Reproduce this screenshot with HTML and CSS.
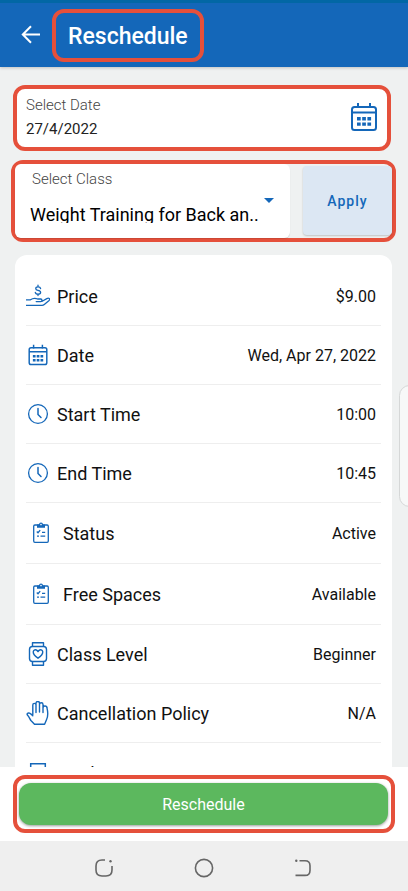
FILE: index.html
```html
<!DOCTYPE html>
<html lang="en">
<head>
<meta charset="utf-8">
<meta name="viewport" content="width=device-width, initial-scale=1">
<title>Reschedule</title>
<link rel="stylesheet" href="styles.css">
</head>
<body>
<svg class="sprite" aria-hidden="true">
  <symbol id="calendar" viewBox="0 0 28 30">
    <g fill="none" stroke="currentColor" stroke-width="2"><rect x="2" y="5" width="24" height="23" rx="2.5"/><path d="M2 10.5h24M8 1v5M20 1v5"/></g>
    <path fill="currentColor" d="M7 15h3.7v3.4H7zM12.2 15h3.7v3.4h-3.7zM17.4 15h3.7v3.4h-3.7zM7 20.4h3.7v3.4H7zM12.2 20.4h3.7v3.4h-3.7zM17.4 20.4h3.7v3.4h-3.7z"/>
  </symbol>
  <symbol id="clock" viewBox="0 0 24 24">
    <g fill="none" stroke="currentColor" stroke-width="1.3" stroke-linecap="round"><circle cx="12" cy="12" r="9.4"/><path stroke-width="1.5" d="M12 6.5v6l3 3"/></g>
  </symbol>
  <symbol id="clipboard" viewBox="0 0 24 24">
    <g fill="none" stroke="currentColor" stroke-width="1.3"><rect x="4.7" y="4" width="14.6" height="17.3" rx="1.2"/><path d="M7.8 10.5l1.2 1.2 2.2-2.6M13 11.3h3.2M8 15.2h2M11.5 15.2h4.7"/></g>
    <path fill="currentColor" d="M8 3.5h2a2 2 0 0 1 4 0h2v3.2H8z"/><circle cx="12" cy="3.6" r=".8" fill="#fff"/>
  </symbol>
  <symbol id="pay" viewBox="0 0 24 24">
    <g fill="none" stroke="currentColor" stroke-width="1.3" stroke-linecap="round" stroke-linejoin="round"><path d="M0 15.8h4.5c2-1.5 4.3-1.8 6-1.1l1 .3h3.2c1.7 0 1.7 2.6 0 2.6h-4.5M16.2 17.2l4.6-2.6c2-1.1 3.9.2 2.3 1.8l-4.8 4q-1 .9-2.3.9H0"/><path d="M14.6 4.5c-.3-1.3-1.2-1.7-2.5-1.7-3.1 0-3.1 3.1-.2 3.6 3.7.6 3.5 3.8.1 3.8-1.6 0-2.5-.7-2.7-1.9M12 1.2v1.6M12 10.2v1.3"/></g>
  </symbol>
  <symbol id="watch" viewBox="0 0 24 24">
    <g fill="none" stroke="currentColor" stroke-width="1.4" stroke-linejoin="round"><rect x="3.5" y="4.5" width="17" height="15" rx="3"/><path d="M6.5 4.2V.7h11v3.5M6.5 19.8v3.5h11v-3.5M12 16.2c-7.5-5.2-4.6-9.3-1.7-8.2q1.1.4 1.7 1.6.6-1.2 1.7-1.6c2.9-1.1 5.8 3-1.7 8.2z"/></g>
  </symbol>
  <symbol id="hand" viewBox="0 0 24 24">
    <path fill="none" stroke="currentColor" stroke-width="1.4" stroke-linecap="round" stroke-linejoin="round" d="M6.8 13.5V4a1.6 1.6 0 0 1 3.2 0v7.5M10 11V2.2a1.7 1.7 0 0 1 3.5 0V11M13.5 3.5a1.7 1.7 0 0 1 3.5 0v8M17 7a1.9 1.9 0 0 1 4-.1c.9 3.9 1.2 8.3-.4 11.6l-2 4.7H8.5L4.9 19.5c-1.2-1.8-1.6-3.4-3.3-5.2-1.2-1.6.2-2.8 1.9-2.1q1.5.7 3.3 2.6"/>
  </symbol>
  <symbol id="building" viewBox="0 0 24 24">
    <g fill="none" stroke="currentColor" stroke-width="1.5"><path d="M4.7 23V2.7h14.6V23M3 23h18M10 23v-5h4v5"/><path d="M8 7h2.5M13.5 7H16M8 11h2.5M13.5 11H16M8 15h2.5M13.5 15H16"/></g>
  </symbol>
</svg>

<header class="topbar">
  <button class="icon-button back" type="button" aria-label="Back">
    <svg viewBox="0 0 20 20" width="20" height="20"><path d="M19 9.5H2M10 1.3L1.8 9.5l8.2 8.2" fill="none" stroke="currentColor" stroke-width="2"/></svg>
  </button>
  <h1 class="title marked">Reschedule</h1>
</header>

<main class="content">
  <div class="date-field marked">
    <div class="date-text">
      <label for="date">Select Date</label>
      <input id="date" type="text" value="27/4/2022">
    </div>
    <button class="icon-button" type="button" aria-label="Open calendar"><svg width="28" height="30"><use href="#calendar"/></svg></button>
  </div>

  <div class="class-row marked">
    <div class="class-field">
      <label for="class">Select Class</label>
      <div class="select-line">
        <select id="class"><option>Weight Training for Back an..</option></select>
        <svg class="caret" viewBox="0 0 10 5" width="10" height="5"><path d="M0 0h10L5 5z" fill="currentColor"/></svg>
      </div>
    </div>
    <button class="apply" type="button">Apply</button>
  </div>

  <dl class="details">
    <div class="row"><dt><svg class="icon"><use href="#pay"/></svg>Price</dt><dd>$9.00</dd></div>
    <div class="row"><dt><svg class="icon small"><use href="#calendar"/></svg>Date</dt><dd>Wed, Apr 27, 2022</dd></div>
    <div class="row"><dt><svg class="icon"><use href="#clock"/></svg>Start Time</dt><dd>10:00</dd></div>
    <div class="row"><dt><svg class="icon"><use href="#clock"/></svg>End Time</dt><dd>10:45</dd></div>
    <div class="row inset"><dt><svg class="icon"><use href="#clipboard"/></svg>Status</dt><dd>Active</dd></div>
    <div class="row inset"><dt><svg class="icon"><use href="#clipboard"/></svg>Free Spaces</dt><dd>Available</dd></div>
    <div class="row"><dt><svg class="icon"><use href="#watch"/></svg>Class Level</dt><dd>Beginner</dd></div>
    <div class="row"><dt><svg class="icon"><use href="#hand"/></svg>Cancellation Policy</dt><dd>N/A</dd></div>
    <div class="row tall"><dt><svg class="icon"><use href="#building"/></svg>Facility</dt><dd></dd></div>
  </dl>
  <div class="edge-handle"></div>
</main>

<footer class="actions">
  <div class="marked action-frame"><button class="primary" type="button">Reschedule</button></div>
</footer>

<nav class="system-nav" aria-label="System">
  <button class="icon-button" type="button" aria-label="Recent apps"><svg width="20" height="20" viewBox="0 0 20 20"><path d="M11 2H8Q2 2 2 8v4q0 6 6 6h4q6 0 6-6V8" fill="none" stroke="currentColor" stroke-width="1.6"/><circle cx="16.5" cy="3.2" r="1.2" fill="currentColor"/></svg></button>
  <button class="icon-button" type="button" aria-label="Home"><svg width="20" height="20" viewBox="0 0 20 20"><circle cx="10" cy="10" r="8.6" fill="none" stroke="currentColor" stroke-width="1.6"/></svg></button>
  <button class="icon-button" type="button" aria-label="Back"><svg width="20" height="20" viewBox="0 0 20 20"><path d="M5.5 2.8H11q5 0 5 5v4.6q0 5-5 5H1.5" fill="none" stroke="currentColor" stroke-width="1.6"/><circle cx="2.3" cy="2.8" r="1.2" fill="currentColor"/></svg></button>
</nav>
</body>
</html>
```
FILE: styles.css
```css
* { box-sizing: border-box; }

:root {
  --blue: #1467b9;
  --mark: #e5503b;
}

body {
  display: flex;
  flex-direction: column;
  height: 100vh;
  margin: 0;
  overflow: hidden;
  background: #eff1f1;
  color: #111;
  font-family: Roboto, "Liberation Sans", sans-serif;
  font-size: 16px;
}

button, input, select {
  margin: 0;
  padding: 0;
  border: 0;
  background: none;
  color: inherit;
  font: inherit;
}

.sprite {
  position: absolute;
  width: 0;
  height: 0;
}

.marked {
  border: 4px solid var(--mark);
  border-radius: 12px;
}

.icon-button {
  display: flex;
  color: var(--blue);
}

.topbar {
  display: flex;
  flex: none;
  align-items: center;
  gap: 11px;
  height: 67px;
  padding: 0 21px;
  border-top: 3px solid #0267a5;
  background: var(--blue);
  box-shadow: 0 1px 3px rgba(0, 0, 0, .2);
}

.back { color: #fff; }

.title {
  margin: 0;
  padding: 2px 12px 0;
  color: #fff;
  font-size: 23px;
  font-weight: 500;
  line-height: 43px;
}

.content {
  position: relative;
  flex: 1;
  min-height: 0;
  padding: 18px 12px 0 11px;
  overflow: hidden;
}

label {
  display: block;
  color: #444;
  font-size: 15px;
  font-weight: 300;
  line-height: 18px;
}

.date-field {
  display: flex;
  align-items: center;
  justify-content: space-between;
  height: 66px;
  margin: 0 5px 9px 2px;
  padding: 0 9px 2px;
  background: #fff;
}

.date-text { flex: 1; }

#date {
  width: 100%;
  margin-top: 6px;
  color: #222;
  font-size: 15px;
  line-height: 18px;
}

.class-row {
  display: flex;
  gap: 13px;
  height: 82px;
}

.class-field {
  flex: 1;
  padding: 6px 16px 6px 15px;
  border-radius: 6px;
  background: #fff;
  box-shadow: 0 1px 1px rgba(0, 0, 0, .12);
}

.class-field label { padding-left: 2px; }

.select-line {
  display: flex;
  margin-top: 10px;
}

#class {
  flex: 1;
  min-width: 0;
  height: 19px;
  margin-top: 6px;
  appearance: none;
  color: #000;
  font-size: 18px;
}

.caret { color: var(--blue); }

.apply {
  width: 89px;
  margin: 2px 0 3px;
  border-radius: 4px;
  background: #dce7f3;
  box-shadow: 0 1px 2px rgba(0, 0, 0, .2);
  color: var(--blue);
  font-size: 14px;
  font-weight: 500;
  letter-spacing: 1px;
}

.details {
  margin: 13px 4px 0;
  padding: 12px 11px 0;
  border-radius: 12px;
  background: #fff;
}

.row {
  display: flex;
  align-items: center;
  justify-content: space-between;
  height: 59px;
  padding-right: 5px;
  border-bottom: 1px solid #eee;
}

.row dt {
  display: flex;
  align-items: center;
  gap: 7px;
  font-size: 18px;
}

.row dd { margin: 0; }

.icon {
  width: 24px;
  height: 24px;
  color: var(--blue);
}

.icon.small { height: 22px; }

.inset,
.tall {
  height: 61px;
}

.inset dt {
  gap: 10px;
  padding-left: 3px;
}

.edge-handle {
  position: absolute;
  top: 318px;
  right: -12px;
  width: 21px;
  height: 122px;
  border: 1px solid #d5d7d7;
  border-radius: 12px;
  background: #f7f8f8;
}

.actions {
  flex: none;
  padding: 8px 13px;
  background: #fff;
}

.action-frame {
  padding: 4px 3px 4px 2px;
}

.primary {
  width: 100%;
  height: 42px;
  border-radius: 12px;
  background: #5cb85e;
  box-shadow: 0 1px 3px rgba(0, 0, 0, .4);
  color: #fff;
}

.system-nav {
  display: flex;
  flex: none;
  align-items: center;
  justify-content: center;
  gap: 80px;
  height: 50px;
  padding-top: 4px;
  background: #efefef;
}

.system-nav .icon-button { color: #666; }
```
